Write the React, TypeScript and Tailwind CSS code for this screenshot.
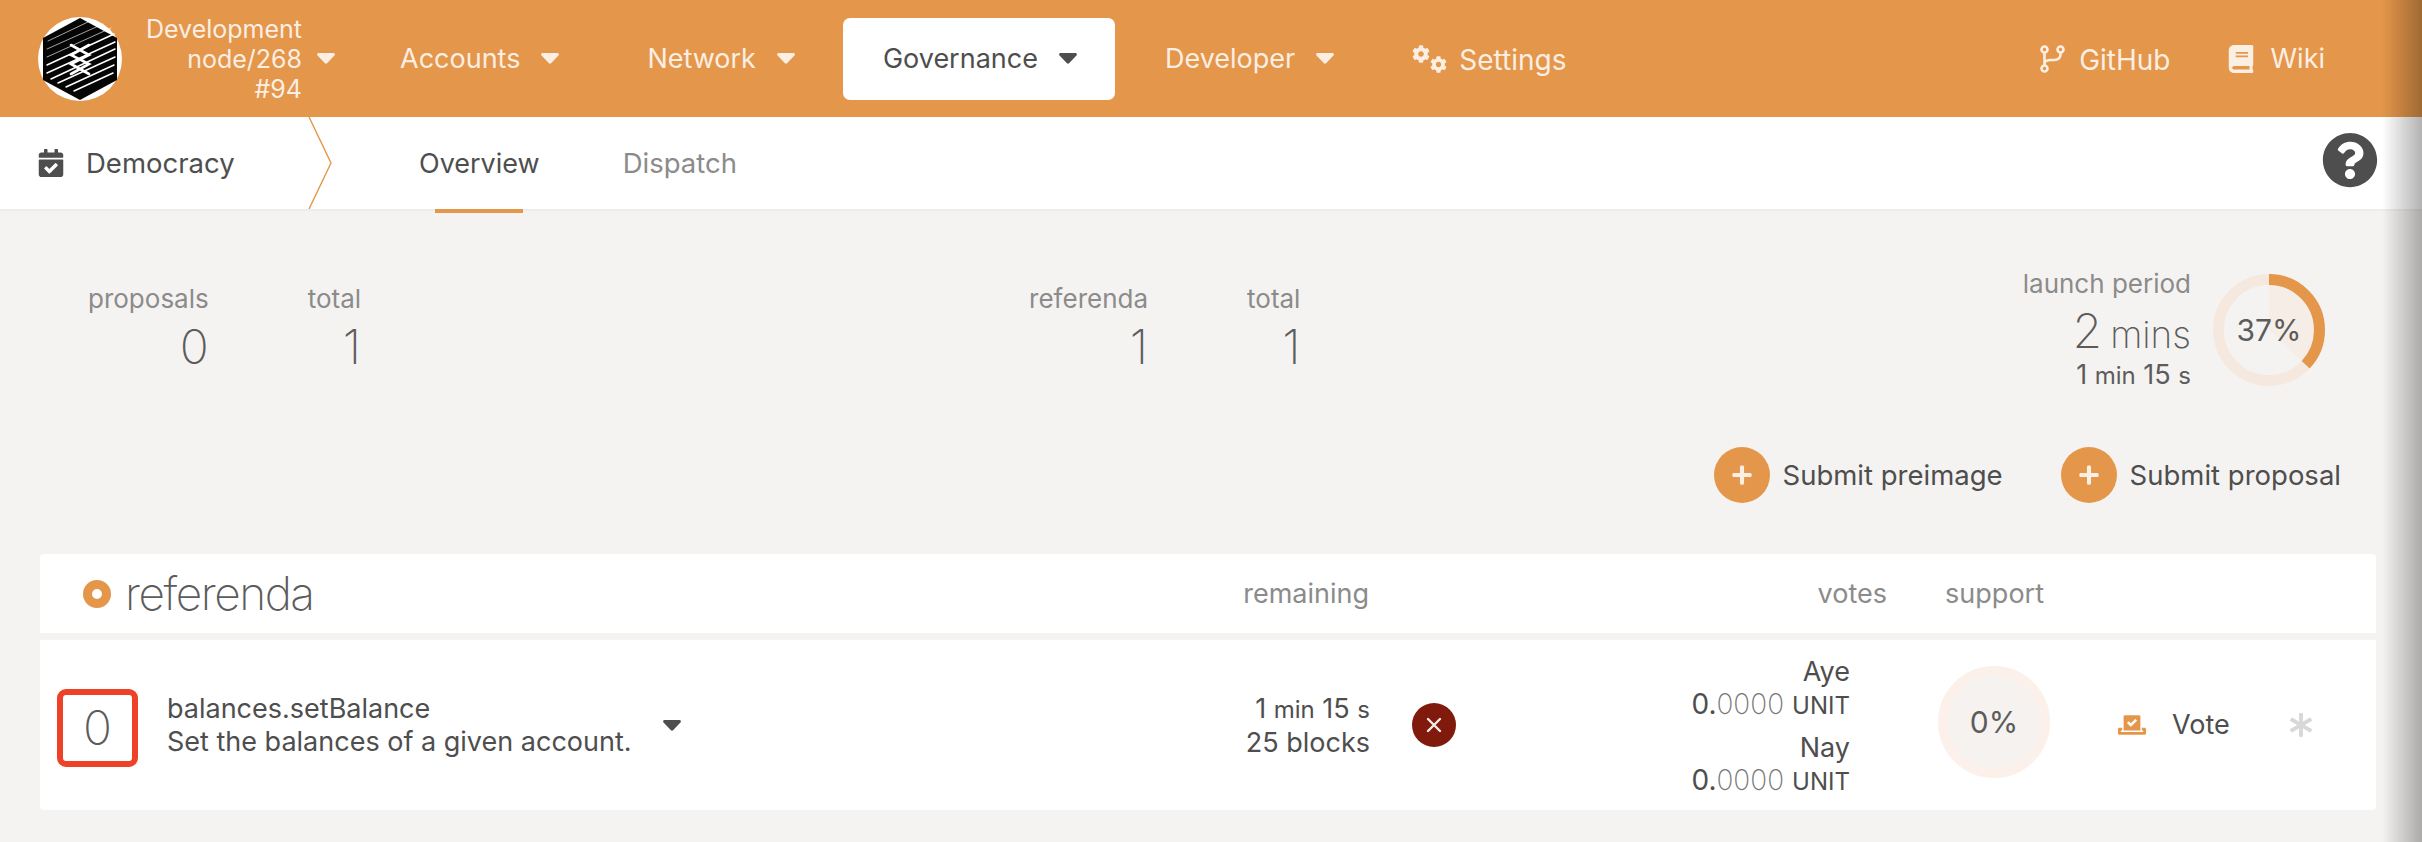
import React from "react";
import { FaCog, FaBook, FaCalendarCheck, FaQuestionCircle, FaPlus, FaVoteYea, FaAsterisk } from "react-icons/fa";

const Caret = ({ className = "" }: { className?: string }) => (
  <svg viewBox="0 0 20 12" className={`w-[18px] h-[11px] shrink-0 ${className}`} fill="currentColor">
    <path d="M1.8 0h16.4c1.5 0 2.2 1.6 1.2 2.7l-8.2 8.7c-.7.7-1.7.7-2.4 0L.6 2.7C-.4 1.6.3 0 1.8 0z" />
  </svg>
);

const NavItem = ({ label, active = false, ml = "ml-[10px]" }: { label: string; active?: boolean; ml?: string }) => (
  <div className={`flex items-center h-[82px] pl-[40px] pr-[38px] gap-[21px] rounded-[7px] ${ml} ${active ? "bg-white text-[#4e4e4e]" : "text-[#fbeee3]"}`}>
    <span className="mt-[2px]">{label}</span>
    <Caret />
  </div>
);

const Logo = () => (
  <svg viewBox="0 0 84 84" className="w-[84px] h-[84px] shrink-0">
    <circle cx="42" cy="42" r="42" fill="#fff" />
    <polygon points="42,1 79,21 79,63 42,83 5,63 5,21" fill="#050505" />
    <g stroke="#fff" strokeLinecap="round" fill="none">
      <path strokeWidth="0.9" d="M10 24l40-19M9 32l56-25M9 40l64-29" opacity="0.7" />
      <path strokeWidth="1.5" d="M9 48l67-31M9 56l68-31M13 62l64-30M20 66l57-26M28 70l48-22M36 74l39-18" />
      <path strokeWidth="2.6" strokeLinejoin="miter" d="M33 28l18 10-18 9 18 10M51 28l-18 10 18 9-18 10" />
    </g>
  </svg>
);

const Branch = () => (
  <svg viewBox="0 0 25 28" className="w-[25px] h-[28px] shrink-0" fill="none" stroke="currentColor" strokeWidth="2.6">
    <circle cx="4.5" cy="4.5" r="3" />
    <circle cx="20.5" cy="4.5" r="3" />
    <circle cx="4.5" cy="23.5" r="3" />
    <path d="M4.5 7.5v13M20.5 7.5v2c0 3.500-2.500 5.500-6 5.500h-4c-3 0-6 1-6 4" />
  </svg>
);

const Cogs = () => (
  <div className="relative w-[35px] h-[28px] shrink-0">
    <FaCog size={18} className="absolute left-0 top-0" />
    <FaCog size={17} className="absolute right-0 bottom-0" />
  </div>
);

const Stat = ({ label, value, className = "" }: { label: string; value: string; className?: string }) => (
  <div className={`flex flex-col items-end ${className}`}>
    <div className="text-[26px] leading-[30px] text-[#8b8b8b]">{label}</div>
    <div className="text-[48px] leading-[56px] mt-[5px] font-extralight text-[#5c5c5c]">{value}</div>
  </div>
);

const Duration = ({ className = "" }: { className?: string }) => (
  <div className={`text-[27px] ${className}`}>
    <span>1</span> <span className="text-[24px]">min</span> <span>15</span> <span className="text-[24px]">s</span>
  </div>
);

const Balance = () => (
  <div className="text-[28px] leading-[33px] whitespace-nowrap">
    <span>0.</span>
    <span className="font-extralight text-[#777]">0000</span>
    <span className="text-[24px] ml-[8px]">UNIT</span>
  </div>
);

const Submit = ({ label, className = "" }: { label: string; className?: string }) => (
  <div className={`flex items-center gap-[13px] ${className}`}>
    <div className="w-[56px] h-[56px] rounded-full bg-[#e4964a] flex items-center justify-center text-[#fbeee3]">
      <FaPlus size={22} />
    </div>
    <span className="text-[27.5px] mt-[1px] text-[#4e4e4e]">{label}</span>
  </div>
);

export default function App() {
  return (
    <div className="relative w-[2422px] h-[842px] overflow-hidden bg-[#f5f3f1] text-[#4e4e4e] font-['Inter',sans-serif]">
      <header className="h-[117px] bg-[#e4964a] flex items-center pl-[38px] pr-[97px] text-[27px]">
        <Logo />
        <div className="ml-[25px] flex flex-col items-end text-[25px] leading-[30px] text-[#fbeee3] w-[155px] whitespace-nowrap">
          <span>Development</span>
          <span>node/268</span>
          <span>#94</span>
        </div>
        <Caret className="ml-[15px] text-[#fbeee3]" />
        <NavItem label="Accounts" ml="ml-[25px]" />
        <NavItem label="Network" />
        <NavItem label="Governance" active />
        <NavItem label="Developer" />
        <div className="flex items-center gap-[12px] ml-[40px] text-[#fbeee3]">
          <Cogs />
          <span className="mt-[2px] text-[28px]">Settings</span>
        </div>
        <div className="flex items-center gap-[14px] ml-auto text-[#fbeee3]">
          <Branch />
          <span className="mt-[2px] text-[28px]">GitHub</span>
        </div>
        <div className="flex items-center gap-[15px] ml-[57px] text-[#fbeee3]">
          <FaBook size={28} />
          <span className="mt-[2px]">Wiki</span>
        </div>
      </header>

      <nav className="h-[94px] bg-white border-b-[2px] border-[#efedeb] flex items-center text-[27px]">
        <div className="relative flex items-center h-full w-[332px] shrink-0 pl-[37px]">
          <FaCalendarCheck size={28} className="shrink-0" />
          <span className="ml-[21px] mt-[2px] text-[27.5px]">Democracy</span>
          <svg viewBox="0 0 24 92" className="absolute right-0 top-0 w-[24px] h-[92px]" fill="none" stroke="#e4964a" strokeWidth="1.4">
            <path d="M1 0l22 46L1 92" />
          </svg>
        </div>
        <div className="relative ml-[87px] h-full flex items-center">
          <span className="mt-[2px]">Overview</span>
          <div className="absolute left-[16px] right-[17px] -bottom-[4px] h-[4px] bg-[#e4964a]" />
        </div>
        <div className="ml-[83px] mt-[2px] text-[27.5px] text-[#8b8b8b]">Dispatch</div>
        <FaQuestionCircle size={56} className="ml-auto mr-[44px] mb-[6px]" />
      </nav>

      <section className="flex items-start pl-[88px] pr-[97px] pt-[73px] h-[236px]">
        <Stat label="proposals" value="0" />
        <Stat label="total" value="1" className="ml-[99px]" />
        <Stat label="referenda" value="1" className="ml-[668px]" />
        <Stat label="total" value="1" className="ml-[99px]" />
        <div className="ml-auto flex items-start -mt-[15px]">
          <div className="flex flex-col items-end text-[#5c5c5c]">
            <div className="text-[26px] leading-[30px] text-[#8b8b8b]">launch period</div>
            <div className="text-[48px] leading-[43px] font-extralight mt-[10px]">2<span className="text-[37px] ml-[8px]">mins</span></div>
            <Duration className="leading-[28px] mt-[5px]" />
          </div>
          <div className="relative ml-[22px] mt-[5px] w-[112px] h-[112px] shrink-0 flex items-center justify-center text-[30px] text-[#5c5c5c]">
            <svg viewBox="0 0 112 112" className="absolute inset-0 w-full h-full">
              <path d="M56 56L56 5A51 51 0 0 1 93.2 90.9Z" fill="#f5ede6" />
              <circle cx="56" cy="56" r="50.5" fill="none" stroke="#f5e9df" strokeWidth="11" />
              <circle cx="56" cy="56" r="50.5" fill="none" stroke="#e4964a" strokeWidth="11" strokeDasharray="117.4 400" transform="rotate(-90 56 56)" />
            </svg>
            <span className="relative">37%</span>
          </div>
        </div>
      </section>

      <div className="flex justify-end pr-[81px] h-[56px]">
        <Submit label="Submit preimage" />
        <Submit label="Submit proposal" className="ml-[58px]" />
      </div>

      <div className="ml-[40px] w-[2336px] mt-[51px] flex flex-col gap-[7px]">
        <div className="h-[79px] bg-white rounded-t-[4px] flex items-center text-[#8b8b8b] text-[27px]">
          <div className="w-[71px] flex justify-end shrink-0">
            <div className="w-[28px] h-[28px] rounded-full border-[9px] border-[#e4964a] bg-white" />
          </div>
          <div className="ml-[14px] text-[46px] tracking-[-1.5px] font-extralight text-[#5c5c5c] leading-none w-[1244px] shrink-0 -mt-[2px]">referenda</div>
          <div className="w-[0px] flex justify-end mt-[1px] whitespace-nowrap">remaining</div>
          <div className="w-[518px] flex justify-end mt-[1px]">votes</div>
          <div className="w-[157px] flex justify-end mt-[1px]">support</div>
        </div>
        <div className="h-[170px] bg-white rounded-b-[4px] flex items-center">
          <div className="ml-[17px] mt-[6px] w-[81px] h-[78px] border-[6px] border-[#ee4128] rounded-[9px] flex items-center justify-center text-[48px] font-extralight text-[#5c5c5c] shrink-0">0</div>
          <div className="ml-[29px] text-[27px] leading-[33px] w-[496px] shrink-0">
            <div>balances.setBalance</div>
            <div>Set the balances of a given account.</div>
          </div>
          <Caret className="text-[#4e4e4e]" />
          <div className="ml-[502px] w-[187px] shrink-0 flex flex-col items-end text-[27px] leading-[33px]">
            <Duration />
            <div>25 blocks</div>
          </div>
          <div className="ml-[42px] w-[44px] h-[44px] rounded-full bg-[#7f1a0d] flex items-center justify-center shrink-0">
            <svg viewBox="0 0 16 16" className="w-[16px] h-[16px]" fill="none" stroke="#f5ebe6" strokeWidth="2.4" strokeLinecap="round">
              <path d="M2 2l12 12M14 2L2 14" />
            </svg>
          </div>
          <div className="w-[394px] shrink-0 flex flex-col items-end pt-[2px]">
            <div className="text-[27px] leading-[33px]">Aye</div>
            <Balance />
            <div className="text-[27px] leading-[33px] mt-[9px]">Nay</div>
            <Balance />
          </div>
          <div className="ml-[88px] mb-[6px] w-[112px] h-[112px] rounded-full bg-[#f5f2f0] border-[10px] border-[#fbf1ea] flex items-center justify-center text-[30px] text-[#5c5c5c] shrink-0">0%</div>
          <div className="ml-[68px] flex items-center shrink-0">
            <FaVoteYea size={28} className="text-[#e4964a]" />
            <span className="ml-[26px] text-[27px]">Vote</span>
          </div>
          <FaAsterisk size={24} className="ml-[59px] text-[#d8d8d8]" />
        </div>
      </div>

      <div className="absolute right-0 top-0 bottom-0 w-[40px] bg-gradient-to-r from-transparent to-black/30" />
    </div>
  );
}
